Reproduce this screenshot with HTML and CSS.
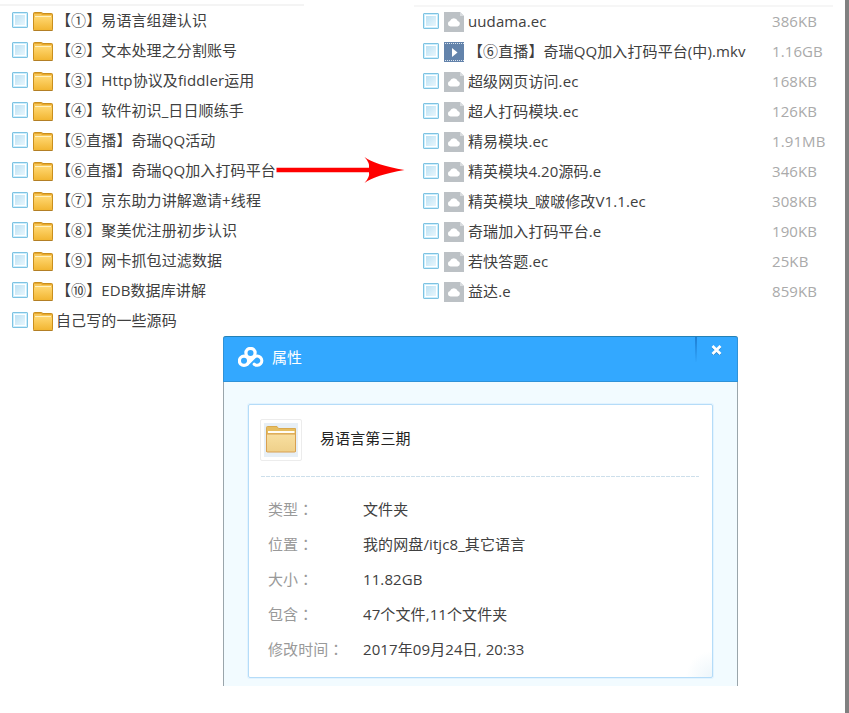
FILE: index.html
```
<!DOCTYPE html>
<html lang="zh-CN">
<head>
<meta charset="utf-8">
<title>属性</title>
<link rel="stylesheet" href="styles.css">
</head>
<body>
<svg class="defs" aria-hidden="true">
  <defs>
    <linearGradient id="gold" x1="0" y1="0" x2="0" y2="1"><stop offset="0" stop-color="#ffd66f"/><stop offset="1" stop-color="#f2b632"/></linearGradient>
    <linearGradient id="sand" x1="0" y1="0" x2="0" y2="1"><stop offset="0" stop-color="#f8dfa0"/><stop offset="1" stop-color="#efd08a"/></linearGradient>
  </defs>
  <symbol id="folder" viewBox="0 0 20 20">
    <path d="M.5 1.500Q.5.5 1.500.5H8.500L10 1.500H18.500Q19.500 1.500 19.500 2.500V17.500Q19.500 18.500 18.500 18.500H1.500Q.5 18.500 .5 17.500Z" fill="#e9a92e" stroke="#c98f1e"/>
    <path d="M1 2H8L9 3H19V5H1Z" fill="#f6c658"/>
    <path d="M2 4H18V5H2Z" fill="#fff1bf"/>
    <path d="M1 6Q1 5 2 5H18Q19 5 19 6V18H1Z" fill="url(#gold)"/>
    <path d="M.5 18.500H19.500" stroke="#b37f25"/>
  </symbol>
  <symbol id="file" viewBox="0 0 20 20">
    <path d="M0 0H16L20 4V20H0Z" fill="#bcc1c5"/>
    <path d="M16 0V4H20Z" fill="#d9dcdf"/>
    <path d="M6.500 14.500A2.800 2.800 0 0 1 6 9A4.100 4.100 0 0 1 13.700 9A2.800 2.800 0 0 1 13.500 14.500Z" fill="#fff"/>
  </symbol>
  <symbol id="video" viewBox="0 0 20 20">
    <path d="M0 0H20V20H0Z" fill="#6383ab"/>
    <path d="M1 1.500H20M1 18.500H20" stroke="#dce5ef" stroke-dasharray="1 1"/>
    <path d="M8 6L13.500 10.500L8 15Z" fill="#fff"/>
  </symbol>
</svg>
<main class="page">
  <div class="lists">
    <ul class="list folders">
      <li><i class="check"></i><svg><use href="#folder"/></svg><span>【①】易语言组建认识</span></li>
      <li><i class="check"></i><svg><use href="#folder"/></svg><span>【②】文本处理之分割账号</span></li>
      <li><i class="check"></i><svg><use href="#folder"/></svg><span>【③】Http协议及fiddler运用</span></li>
      <li><i class="check"></i><svg><use href="#folder"/></svg><span>【④】软件初识_日日顺练手</span></li>
      <li><i class="check"></i><svg><use href="#folder"/></svg><span>【⑤直播】奇瑞QQ活动</span></li>
      <li><i class="check"></i><svg><use href="#folder"/></svg><span>【⑥直播】奇瑞QQ加入打码平台</span></li>
      <li><i class="check"></i><svg><use href="#folder"/></svg><span>【⑦】京东助力讲解邀请+线程</span></li>
      <li><i class="check"></i><svg><use href="#folder"/></svg><span>【⑧】聚美优注册初步认识</span></li>
      <li><i class="check"></i><svg><use href="#folder"/></svg><span>【⑨】网卡抓包过滤数据</span></li>
      <li><i class="check"></i><svg><use href="#folder"/></svg><span>【⑩】EDB数据库讲解</span></li>
      <li><i class="check"></i><svg><use href="#folder"/></svg><span>自己写的一些源码</span></li>
    </ul>
    <ul class="list files">
      <li><i class="check"></i><svg><use href="#file"/></svg><span class="name">uudama.ec</span><span class="size">386KB</span></li>
      <li><i class="check"></i><svg><use href="#video"/></svg><span class="name">【⑥直播】奇瑞QQ加入打码平台(中).mkv</span><span class="size">1.16GB</span></li>
      <li><i class="check"></i><svg><use href="#file"/></svg><span class="name">超级网页访问.ec</span><span class="size">168KB</span></li>
      <li><i class="check"></i><svg><use href="#file"/></svg><span class="name">超人打码模块.ec</span><span class="size">126KB</span></li>
      <li><i class="check"></i><svg><use href="#file"/></svg><span class="name">精易模块.ec</span><span class="size">1.91MB</span></li>
      <li><i class="check"></i><svg><use href="#file"/></svg><span class="name">精英模块4.20源码.e</span><span class="size">346KB</span></li>
      <li><i class="check"></i><svg><use href="#file"/></svg><span class="name">精英模块_啵啵修改V1.1.ec</span><span class="size">308KB</span></li>
      <li><i class="check"></i><svg><use href="#file"/></svg><span class="name">奇瑞加入打码平台.e</span><span class="size">190KB</span></li>
      <li><i class="check"></i><svg><use href="#file"/></svg><span class="name">若快答题.ec</span><span class="size">25KB</span></li>
      <li><i class="check"></i><svg><use href="#file"/></svg><span class="name">益达.e</span><span class="size">859KB</span></li>
    </ul>
    <svg class="arrow" viewBox="0 0 130 28"><path d="M1.500 11.800H94Q95 7 89.500 1Q100 9 129.500 14Q100 19 89.500 27Q95 21 94 16.200H1.500Z" fill="#f00"/></svg>
  </div>
  <section class="dialog">
    <header class="bar">
      <svg class="logo" viewBox="0 0 26 20" fill="none" stroke="#fff" stroke-width="3.200"><circle cx="12.500" cy="6" r="4.600"/><circle cx="6" cy="13.800" r="4.600"/><path d="M9.500 17L16 10.300A4.600 4.600 0 1 1 16.200 17.200" stroke-linecap="round"/></svg>
      <h1>属性</h1>
      <div class="close"><svg viewBox="0 0 12 10"><path d="M2 1L10 9M10 1L2 9" stroke="#2280ca" stroke-width="3" transform="translate(0 .8)"/><path d="M2 1L10 9M10 1L2 9" stroke="#fff" stroke-width="2.800"/></svg></div>
    </header>
    <div class="panel">
      <div class="title">
        <div class="thumb"><svg viewBox="0 0 34 34"><path d="M0 0H34V34H0Z" fill="#e7eff6"/><path d="M2.500 4.500Q2.500 3.500 3.500 3.500H13L14.500 5.500H31.500V28.500H2.500Z" fill="#e6bd60" stroke="#d9a94e"/><path d="M4 8H30.500V10H4Z" fill="#fffdf5"/><path d="M2.500 11H31.500V28Q31.500 29 30.500 29H3.500Q2.500 29 2.500 28Z" fill="url(#sand)" stroke="#d8a050"/></svg></div>
        <h2>易语言第三期</h2>
      </div>
      <svg class="rule"><path d="M0 .5H438" stroke="#cddfeb" stroke-dasharray="4 1"/></svg>
      <dl>
        <dt>类型<span class="colon" lang="zh-TW">：</span></dt><dd>文件夹</dd>
        <dt>位置<span class="colon" lang="zh-TW">：</span></dt><dd>我的网盘/itjc8_其它语言</dd>
        <dt>大小<span class="colon" lang="zh-TW">：</span></dt><dd>11.82GB</dd>
        <dt>包含<span class="colon" lang="zh-TW">：</span></dt><dd>47个文件,11个文件夹</dd>
        <dt>修改时间<span class="colon" lang="zh-TW">：</span></dt><dd>2017年09月24日, 20:33</dd>
      </dl>
    </div>
  </section>
</main>
</body>
</html>
```
FILE: styles.css
```
* { box-sizing: border-box; }
body {
  margin: 0;
  background: #fff;
  color: #404040;
  font: 15px/30px "Open Sans", "Noto Sans CJK SC", sans-serif;
  font-kerning: none;
  font-variant-ligatures: none;
  letter-spacing: .1px;
}
.defs { position: absolute; width: 0; height: 0; }
.page { height: 713px; border-right: 4px solid #808080; overflow: hidden; }
.lists { position: relative; display: flex; height: 336px; }
.list { list-style: none; margin: 0; padding: 0; white-space: nowrap; }
.list li { display: flex; align-items: center; height: 30px; }
.list li:first-child { margin-top: -1px; }
.list svg { width: 20px; height: 20px; flex: none; }
.folders { width: 304px; margin: 4px 110px 0 0; border-top: 2px solid #f4f4f4; }
.folders li { padding-left: 12px; }
.folders svg { margin: 3px 3px 0 5px; }
.folders span { margin-top: -1px; }
.files { width: 419px; margin-top: 5px; border-top: 2px solid #f6f6f6; }
.files li { padding-left: 9px; }
.files svg { margin: 1px 4px 0 5px; }
.name { width: 304px; }
.size { color: #aaa; }
.check {
  width: 16px;
  height: 16px;
  flex: none;
  border: 1px solid #7ec3e2;
  border-radius: 1px;
  background: linear-gradient(135deg, #b4ddf2, #f1fafe);
  box-shadow: inset 0 0 0 1px #cdeefd, inset 0 0 0 2px #fff;
}
.arrow { position: absolute; left: 275px; top: 156px; width: 130px; height: 28px; }
.dialog {
  width: 515px;
  height: 350px;
  margin-left: 223px;
  background: #f2fbff;
  border: solid #9aa5ab;
  border-width: 0 1px;
  border-radius: 3px 3px 0 0;
}
.bar {
  display: flex;
  align-items: flex-start;
  height: 46px;
  margin: 0 -1px;
  background: #33a8ff;
  border: 1px solid #2e92d8;
  border-top-color: #2481b5;
  border-radius: 3px 3px 0 0;
}
.logo { width: 26px; height: 20px; margin: 10px 8px 0 14px; }
h1, h2 { margin: 0; font-size: 15px; font-weight: 400; }
h1 { color: #fff; margin-top: 5px; }
.close {
  display: flex;
  width: 42px;
  height: 25px;
  margin-left: auto;
  padding: 8px 0 0 13px;
  border-left: 2px solid;
  border-image: linear-gradient(#1c7cd0, #33a8ff) 1;
}
.close svg { width: 13px; height: 10px; }
.panel {
  width: 465px;
  height: 274px;
  margin: 22px 0 0 24px;
  padding: 14px 12px 0;
  border: 1px solid #b5dcf8;
  border-radius: 2px;
  background: radial-gradient(circle at 100% 100%, #edf6fb, #fff 26px);
  box-shadow: 0 0 0 1px #e2f3ff;
}
.title { display: flex; align-items: center; }
.thumb { display: flex; width: 42px; height: 42px; padding: 3px; margin-left: -1px; border: 1px solid #ececec; border-radius: 2px; }
.thumb svg { width: 34px; height: 34px; }
h2 { margin: -4px 0 0 18px; color: #222; }
.rule { display: block; width: 438px; height: 1px; margin-top: 15px; }
dl { display: grid; grid-template-columns: 95px 1fr; grid-auto-rows: 35px; margin: 15px 0 0 7px; line-height: 35px; }
dt { color: #999; }
.colon { font-family: "Noto Sans CJK TC", sans-serif; line-height: 1; }
dd { margin: 0; }
```
